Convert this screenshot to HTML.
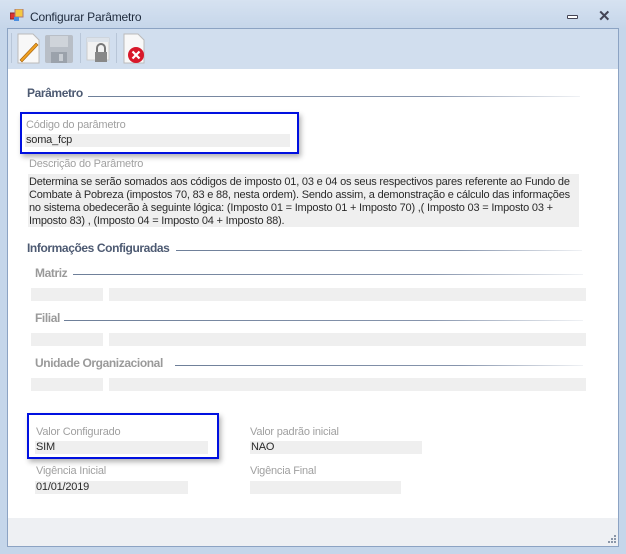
<!DOCTYPE html>
<html><head><meta charset="utf-8"><style>
*{margin:0;padding:0;box-sizing:border-box}
body{width:626px;height:554px;overflow:hidden;background:#c5d6ea;font-family:"Liberation Sans",sans-serif;position:relative}
.a{position:absolute;white-space:nowrap}
.t{font-size:11px;letter-spacing:-0.2px;color:#2a2a2a}
.lbl{font-size:11px;letter-spacing:-0.2px;color:#a0a0a0}
.f{position:absolute;background:#efefef}
.h{position:absolute;font-size:12px;font-weight:bold;color:#4d5a72;letter-spacing:-0.4px}
.hg{position:absolute;font-size:12px;font-weight:bold;color:#9a9a9a;letter-spacing:-0.4px}
.ln{position:absolute;height:1px;background:linear-gradient(90deg,#6e7f99,#8795ad 70%,#f0f2f5)}
.blue{position:absolute;border:2px solid #0010e0;box-shadow:2px 3px 5px rgba(0,0,0,.3)}
.sep{position:absolute;top:33px;width:1px;height:30px;background:#fff;border-left:1px solid #b8c6d8}
</style></head><body>
<div class="a" style="left:0;top:0;width:626px;height:28px;background:linear-gradient(#d6e2f1,#c6d6ea)"></div>
<svg class="a" style="left:10px;top:9px" width="14" height="14"><rect x="0" y="4" width="6" height="6" fill="#d33" stroke="#822"/><rect x="5" y="0" width="8" height="8" fill="#f5c842" stroke="#a77"/><rect x="4" y="8" width="5" height="4" fill="#4a8ee0"/></svg>
<div class="a" style="left:30px;top:10px;font-size:12px;color:#1e2a3c;letter-spacing:-0.2px">Configurar Parâmetro</div>
<div class="a" style="left:567px;top:15px;width:11px;height:4px;border:1px solid #445;background:#fff;border-radius:1px"></div>
<div class="a" style="left:598px;top:7px;font-size:15px;font-weight:bold;color:#445">✕</div>
<div class="a" style="left:7px;top:28px;width:612px;height:519px;border:1px solid #8ca3c3;background:#eef0f3"></div>
<div class="a" style="left:8px;top:29px;width:610px;height:40px;background:#d1deee"></div>
<div class="a" style="left:8px;top:69px;width:610px;height:449px;background:#fff"></div>
<div class="sep" style="left:11px"></div><div class="sep" style="left:80px"></div><div class="sep" style="left:116px"></div>
<svg class="a" style="left:16px;top:33px" width="26" height="32"><path d="M2 1h15l6 6v23H2z" fill="#f8f8f8" stroke="#bbb"/><path d="M4 27L20 10l2 2L6 29z" fill="#f0a020" stroke="#a06010" stroke-width=".6"/></svg>
<svg class="a" style="left:44px;top:34px" width="30" height="30"><rect x="1" y="1" width="28" height="28" rx="2" fill="#b8bec6"/><rect x="6" y="2" width="18" height="11" fill="#cfd4da"/><rect x="7" y="18" width="16" height="11" fill="#9ba2ab"/><rect x="15" y="20" width="4" height="7" fill="#c8cdd3"/></svg>
<svg class="a" style="left:86px;top:36px" width="26" height="28"><rect x="1" y="2" width="22" height="22" fill="#f2f2f2" stroke="#ccc"/><rect x="1" y="2" width="22" height="4" fill="#dde3ea"/><path d="M11 16v-4a4 4 0 0 1 8 0v4" fill="none" stroke="#777" stroke-width="2"/><rect x="9" y="16" width="12" height="10" fill="#888"/></svg>
<svg class="a" style="left:122px;top:33px" width="26" height="32"><path d="M2 1h14l6 6v23H2z" fill="#f8f8f8" stroke="#bbb"/><circle cx="14" cy="22" r="8" fill="#d8182a"/><path d="M10.5 18.5l7 7M17.5 18.5l-7 7" stroke="#fff" stroke-width="2.2"/></svg>

<div class="h" style="left:27px;top:86px">Parâmetro</div><div class="ln" style="left:88px;top:96px;width:492px"></div>
<div class="blue" style="left:20px;top:112px;width:279px;height:42px"></div>
<div class="a lbl" style="left:26px;top:119px">Código do parâmetro</div>
<div class="f" style="left:25px;top:134px;width:265px;height:13px"></div>
<div class="a t" style="left:26px;top:134px">soma_fcp</div>
<div class="a lbl" style="left:29px;top:158px">Descrição do Parâmetro</div>
<div class="f" style="left:28px;top:174px;width:551px;height:53px"></div>
<div class="a t" style="left:29px;top:176px;line-height:13px">Determina se serão somados aos códigos de imposto 01, 03 e 04 os seus respectivos pares referente ao Fundo de<br>Combate à Pobreza (impostos 70, 83 e 88, nesta ordem). Sendo assim, a demonstração e cálculo das informações<br>no sistema obedecerão à seguinte lógica: (Imposto 01 = Imposto 01 + Imposto 70) ,( Imposto 03 = Imposto 03 +<br>Imposto 83) , (Imposto 04 = Imposto 04 + Imposto 88).</div>

<div class="h" style="left:27px;top:241px">Informações Configuradas</div><div class="ln" style="left:176px;top:250px;width:406px"></div>
<div class="hg" style="left:35px;top:266px">Matriz</div><div class="ln" style="left:73px;top:274px;width:510px"></div>
<div class="f" style="left:31px;top:288px;width:72px;height:13px"></div><div class="f" style="left:109px;top:288px;width:477px;height:13px"></div>
<div class="hg" style="left:35px;top:311px">Filial</div><div class="ln" style="left:64px;top:320px;width:519px"></div>
<div class="f" style="left:31px;top:333px;width:72px;height:13px"></div><div class="f" style="left:109px;top:333px;width:477px;height:13px"></div>
<div class="hg" style="left:35px;top:356px">Unidade Organizacional</div><div class="ln" style="left:175px;top:365px;width:408px"></div>
<div class="f" style="left:31px;top:378px;width:72px;height:13px"></div><div class="f" style="left:109px;top:378px;width:477px;height:13px"></div>

<div class="blue" style="left:27px;top:413px;width:192px;height:46px"></div>
<div class="a lbl" style="left:36px;top:426px">Valor Configurado</div>
<div class="f" style="left:35px;top:441px;width:173px;height:13px"></div>
<div class="a t" style="left:36px;top:441px">SIM</div>
<div class="a lbl" style="left:250px;top:426px">Valor padrão inicial</div>
<div class="f" style="left:250px;top:441px;width:172px;height:13px"></div>
<div class="a t" style="left:251px;top:441px">NAO</div>
<div class="a lbl" style="left:36px;top:465px">Vigência Inicial</div>
<div class="f" style="left:35px;top:481px;width:153px;height:13px"></div>
<div class="a t" style="left:36px;top:481px">01/01/2019</div>
<div class="a lbl" style="left:250px;top:465px">Vigência Final</div>
<div class="f" style="left:250px;top:481px;width:151px;height:13px"></div>
<svg class="a" style="left:608px;top:535px" width="9" height="9" fill="#8a96a8"><rect x="6" y="0" width="2" height="2"/><rect x="3" y="3" width="2" height="2"/><rect x="6" y="3" width="2" height="2"/><rect x="0" y="6" width="2" height="2"/><rect x="3" y="6" width="2" height="2"/><rect x="6" y="6" width="2" height="2"/></svg>
</body></html>
